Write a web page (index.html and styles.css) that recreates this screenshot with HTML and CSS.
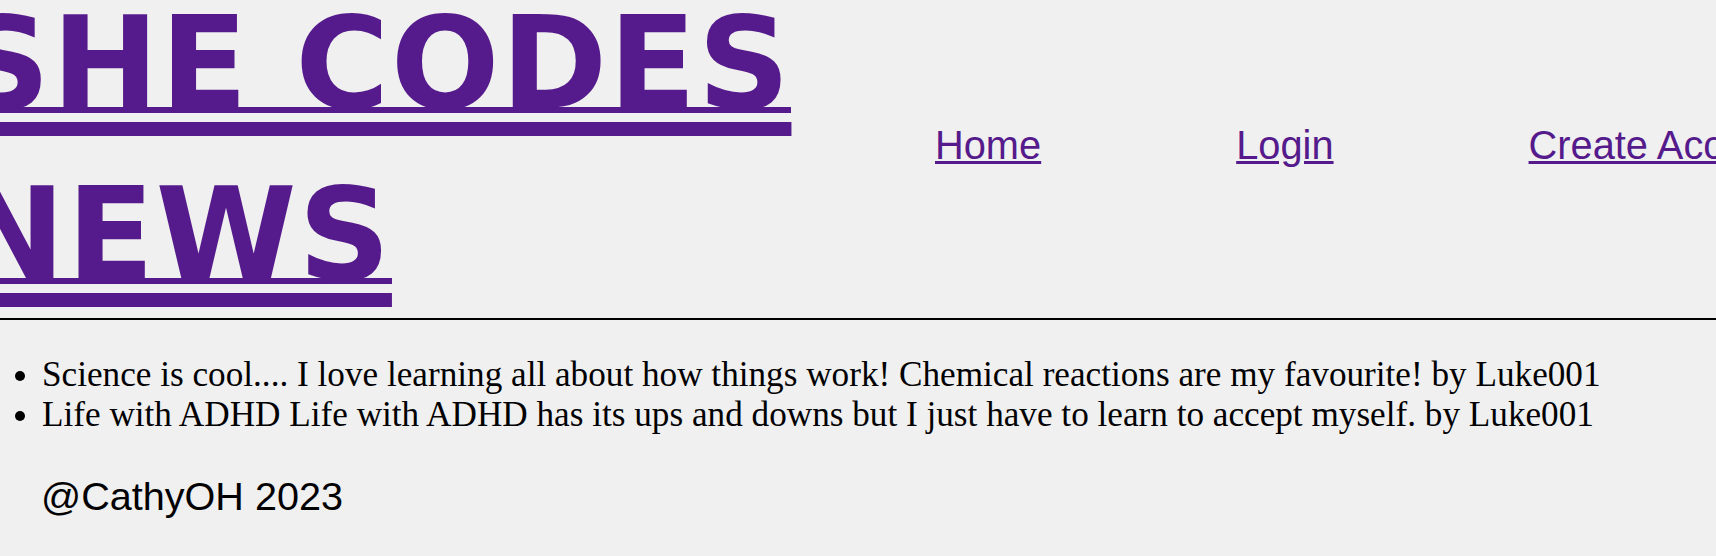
FILE: index.html
```html
<!DOCTYPE html>
<html lang="en">
<head>
<meta charset="utf-8">
<title>She Codes News</title>
<link rel="stylesheet" href="styles.css">
</head>
<body>
<header class="site-header">
  <h1 class="title"><a href="#" class="title-link">SHE CODES NEWS</a></h1>
  <nav class="nav">
    <a href="#" class="nav-link">Home</a>
    <a href="#" class="nav-link">Login</a>
    <a href="#" class="nav-link">Create Account</a>
  </nav>
</header>
<ul class="stories">
  <li class="story">Science is cool.... I love learning all about how things work! Chemical reactions are my favourite! by Luke001</li>
  <li class="story">Life with ADHD Life with ADHD has its ups and downs but I just have to learn to accept myself. by Luke001</li>
</ul>
<footer class="footer">@CathyOH 2023</footer>
</body>
</html>
```

FILE: styles.css
```css
html, body {
  margin: 0;
  padding: 0;
}
body {
  background: #f0f0f0;
  overflow-x: hidden;
  color: #000;
}
.site-header {
  display: flex;
  align-items: flex-start;
  border-bottom: 2px solid #000;
  height: 318px;
}
.title {
  flex: 0 0 870px;
  width: 870px;
  margin: -22px 0 0 -42px;
  font-family: "DejaVu Sans", sans-serif;
  font-weight: bold;
  font-size: 128px;
  line-height: 171px;
  letter-spacing: 1.5px;
}
.title-link {
  color: #551a8b;
  text-decoration: underline;
  text-decoration-thickness: 14px;
  text-underline-offset: 14px;
  background-image: linear-gradient(#551a8b, #551a8b);
  background-repeat: no-repeat;
  background-position: 0 118px;
  background-size: 100% 6px;
}
.nav {
  flex: 0 0 auto;
  display: flex;
  gap: 195px;
  margin-left: 107px;
  padding-top: 123px;
  white-space: nowrap;
}
.nav-link {
  font-family: "Liberation Sans", Arial, sans-serif;
  font-size: 39.8px;
  color: #551a8b;
  text-decoration: underline;
}
.stories {
  margin: 35px 0 0 0;
  padding: 0 0 0 42px;
  font-family: "Liberation Serif", "Times New Roman", serif;
  font-size: 35.2px;
}
.footer {
  margin-top: 39px;
  padding-left: 41px;
  font-family: "Liberation Sans", Arial, sans-serif;
  font-size: 39.6px;
}
```
